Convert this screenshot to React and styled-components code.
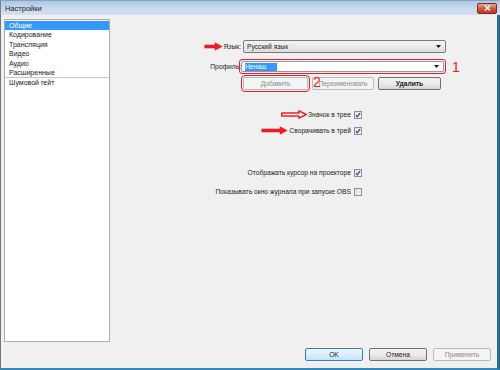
import styled, { createGlobalStyle } from "styled-components";

const GlobalStyle = createGlobalStyle`
  body {
    margin: 0;
    background: #f0f0f0;
    font-family: "Liberation Sans", Tahoma, sans-serif;
    color: #1a1a1a;
  }
`;

const Window = styled.div`
  width: 500px;
  height: 370px;
  display: flex;
  flex-direction: column;
  overflow: hidden;
  background: #f0f0f0;
`;

const TitleBar = styled.div`
  height: 15px;
  flex: none;
  box-sizing: border-box;
  display: flex;
  align-items: center;
  justify-content: space-between;
  padding: 0 3px 0 4px;
  background: linear-gradient(#adc7e3, #c4d8ed 45%, #d3e2f2);
  border-top: 1px solid #8aa3bf;
  border-left: 1px solid #6f8296;
  font-size: 7.5px;
`;

const CloseButton = styled.div`
  width: 18px;
  height: 9px;
  border: 1px solid #7d2c20;
  border-radius: 2px;
  background: linear-gradient(#e9a897, #d4573f 50%, #c03a22);
  display: flex;
  align-items: center;
  justify-content: center;
`;

const Body = styled.div`
  flex: 1;
  min-height: 0;
  display: flex;
  flex-direction: column;
  padding: 4px 6px 7px 3px;
  border-left: 1px solid #6f7780;
  border-right: 3px solid #2a6d8f;
  border-bottom: 2px solid #2f8bbd;
`;

const Main = styled.div`
  flex: 1;
  min-height: 0;
  display: flex;
`;

const SideList = styled.ul`
  width: 106px;
  box-sizing: border-box;
  margin: 0;
  padding: 1px 0 0;
  list-style: none;
  background: #fff;
  border: 1px solid #adadad;
  font-size: 7px;
  flex: none;
`;

const SideItem = styled.li`
  height: 9.4px;
  line-height: 9.4px;
  padding-left: 4px;
  background: ${(p) => (p.$selected ? "#3399ff" : "transparent")};
  color: ${(p) => (p.$selected ? "#fff" : "#1a1a1a")};
  border-bottom: ${(p) => (p.$divider ? "1px solid #c6c6c6" : "none")};
`;

const Panel = styled.div`
  flex: 1;
  display: flex;
  flex-direction: column;
  padding-top: 21px;
  font-size: 6.7px;
`;

const FieldRow = styled.div`
  display: flex;
  align-items: center;
  margin-top: ${(p) => p.$top || 0}px;
`;

const FieldLabel = styled.div`
  width: ${(p) => p.$width}px;
  flex: none;
  display: flex;
  align-items: center;
  justify-content: flex-end;
  gap: 1px;
  padding-right: ${(p) => p.$pad ?? 2}px;
  box-sizing: border-box;
`;

const Combo = styled.div`
  width: 203px;
  height: ${(p) => (p.$editable ? 11 : 13)}px;
  box-sizing: border-box;
  display: flex;
  align-items: center;
  justify-content: space-between;
  padding: 0 4px 0 3px;
  border: 1px solid ${(p) => (p.$editable ? "#8f9aa5" : "#7a7a7a")};
  border-radius: 2px;
  background: ${(p) =>
    p.$editable ? "#fff" : "linear-gradient(#f3f3f3, #ebebeb 50%, #dcdcdc)"};
`;

const Selected = styled.span`
  background: #3399ff;
  color: #fff;
  width: 32px;
  height: 8px;
  display: inline-block;
  line-height: 8px;
`;

const Highlight = styled.div`
  display: flex;
  padding: 1px;
  border: 1.5px solid #ee1c24;
  border-radius: 3px;
  margin-left: -3px;
`;

const Mark = styled.span`
  color: #ee1c24;
  font-size: 14px;
  margin-left: 6px;
  line-height: 1;
`;

const ButtonRow = styled.div`
  display: flex;
  gap: 4px;
  margin-top: 3px;
  padding-left: 133px;
  position: relative;
`;

const Button = styled.button`
  width: ${(p) => p.$width || 65}px;
  height: 13px;
  padding: 0;
  font-family: inherit;
  font-size: 6.7px;
  font-weight: ${(p) => (p.$bold ? 600 : 400)};
  border-radius: 2px;
  border: 1px solid ${(p) => (p.disabled ? "#b9bcbe" : p.$focus ? "#3c7fb1" : "#707070")};
  color: ${(p) => (p.disabled ? "#8a8a8a" : "#1a1a1a")};
  background: ${(p) =>
    p.disabled
      ? "#f4f4f4"
      : p.$focus
      ? "linear-gradient(#eaf6fd, #d9f0fc 50%, #bee6fd)"
      : "linear-gradient(#f2f2f2, #ebebeb 50%, #d6d6d6)"};
  outline: ${(p) => (p.$circled ? "1.5px solid #ee1c24" : "none")};
  outline-offset: 1px;
`;

const Two = styled.span`
  position: absolute;
  left: 203px;
  top: -3px;
  color: #ee1c24;
  font-size: 14px;
`;

const CheckRow = styled.div`
  display: flex;
  align-items: center;
  height: 11px;
  margin-top: ${(p) => p.$top}px;
`;

const Footer = styled.div`
  display: flex;
  justify-content: flex-end;
  gap: 6px;
  margin-top: 6px;
  flex: none;
`;

const Check = ({ on }) => (
  <svg width="8" height="8" viewBox="0 0 8 8">
    <defs>
      <linearGradient id="cb" x1="0" y1="0" x2="1" y2="1">
        <stop offset="0" stopColor="#d8d8d8" />
        <stop offset="1" stopColor="#fbfbfb" />
      </linearGradient>
    </defs>
    <rect x="0.5" y="0.5" width="7" height="7" fill="url(#cb)" stroke="#8e8f8f" />
    {on && (
      <path d="M2 4.3 L3.3 5.8 L6 2.1" fill="none" stroke="#2a3f8f" strokeWidth="1.2" />
    )}
  </svg>
);

const Arrow = ({ w, hollow }) => (
  <svg width={w} height="9" viewBox={`0 0 ${w} 9`}>
    <path
      d={`M0.8 3 H${w - 8} V0.8 L${w - 0.8} 4.5 L${w - 8} 8.2 V6 H0.8 Z`}
      fill={hollow ? "#fff" : "#ee1c24"}
      stroke="#ee1c24"
      strokeWidth={hollow ? 1.5 : 0.6}
      strokeLinejoin="round"
    />
  </svg>
);

const Triangle = () => (
  <svg width="5" height="3" viewBox="0 0 5 3">
    <path d="M0 0 H5 L2.5 3 Z" fill="#1a1a1a" />
  </svg>
);

const menu = ["Общие", "Кодирование", "Трансляция", "Видео", "Аудио", "Расширенные", "Шумовой гейт"];

export default function App() {
  return (
    <Window>
      <GlobalStyle />
      <TitleBar>
        <span>Настройки</span>
        <CloseButton>
          <svg width="7" height="6" viewBox="0 0 7 6">
            <path d="M1 0.5 L6 5.5 M6 0.5 L1 5.5" stroke="#fff" strokeWidth="1.4" />
          </svg>
        </CloseButton>
      </TitleBar>
      <Body>
        <Main>
          <SideList>
            {menu.map((m, i) => (
              <SideItem key={m} $selected={i === 0} $divider={i === 5}>
                {m}
              </SideItem>
            ))}
          </SideList>
          <Panel>
            <FieldRow>
              <FieldLabel $width={133}>
                <Arrow w={19} />
                <span>Язык:</span>
              </FieldLabel>
              <Combo>
                <span>Русский язык</span>
                <Triangle />
              </Combo>
            </FieldRow>
            <FieldRow $top={6}>
              <FieldLabel $width={132} $pad={1}>
                <span>Профиль:</span>
              </FieldLabel>
              <Highlight>
                <Combo $editable>
                  <Selected>Ненаш</Selected>
                  <Triangle />
                </Combo>
              </Highlight>
              <Mark>1</Mark>
            </FieldRow>
            <ButtonRow>
              <Button disabled $circled>
                Добавить
              </Button>
              <Button disabled $width={62}>
                Переименовать
              </Button>
              <Button $width={63} $bold>
                Удалить
              </Button>
              <Two>2</Two>
            </ButtonRow>
            <CheckRow $top={19}>
              <FieldLabel $width={244} $pad={3}>
                <Arrow w={26} hollow />
                <span>Значок в трее</span>
              </FieldLabel>
              <Check on />
            </CheckRow>
            <CheckRow $top={5}>
              <FieldLabel $width={244} $pad={3}>
                <Arrow w={27} />
                <span>Сворачивать в трей</span>
              </FieldLabel>
              <Check on />
            </CheckRow>
            <CheckRow $top={31}>
              <FieldLabel $width={244} $pad={3}>
                <span>Отображать курсор на проекторе</span>
              </FieldLabel>
              <Check on />
            </CheckRow>
            <CheckRow $top={8}>
              <FieldLabel $width={244} $pad={3}>
                <span>Показывать окно журнала при запуске OBS</span>
              </FieldLabel>
              <Check />
            </CheckRow>
          </Panel>
        </Main>
        <Footer>
          <Button $focus $width={58}>
            OK
          </Button>
          <Button $width={58}>Отмена</Button>
          <Button disabled $width={58}>
            Применить
          </Button>
        </Footer>
      </Body>
    </Window>
  );
}
